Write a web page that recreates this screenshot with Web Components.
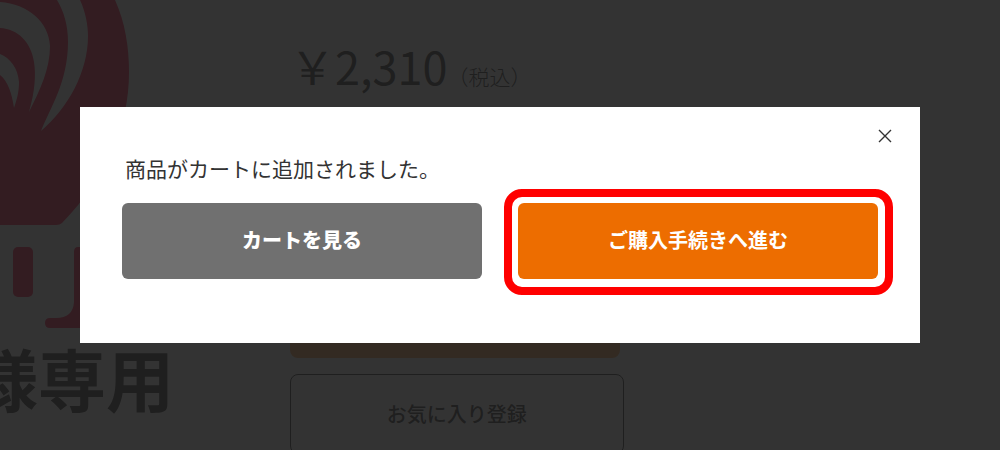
<!DOCTYPE html>
<html lang="ja">
<head>
<meta charset="utf-8">
<meta name="viewport" content="width=device-width, initial-scale=1">
<title>カート</title>
<style>
  html {
    height: 100%;
  }
  body {
    margin: 0;
    height: 100%;
    overflow: hidden;
    background: #fff;
    color: #333;
    font-family: "Noto Sans CJK JP", "Liberation Sans", sans-serif;
    --accent: #ed6d00;
    --gray: #707070;
    --brand: #ff1446;
  }
</style>
</head>
<body>
  <shop-product heading="様専用" price="￥2,310" tax="（税込）">
    <brand-mark slot="image"></brand-mark>
    <button slot="cart" type="button" aria-label="カートに入れる"></button>
    <button slot="favorite" type="button">お気に入り登録</button>
  </shop-product>

  <cart-modal>
    <span slot="message">商品がカートに追加されました。</span>
    <shop-button slot="actions">カートを見る</shop-button>
    <shop-button slot="actions" primary marked>ご購入手続きへ進む</shop-button>
  </cart-modal>

<script>
(function() {
  function createTemplate(html) {
    const template = document.createElement('template');
    template.innerHTML = html;
    return template;
  }

  const markTemplate = createTemplate(`
    <style>
      :host {
        display: block;
      }
      svg {
        display: block;
        fill: var(--brand);
      }
      .cut {
        fill: #fff;
      }
    </style>
    <svg width="174" height="338" viewBox="0 0 174 338" aria-hidden="true">
      <path d="M0 0H115C125 22 129 47 129 72C129 125 108 175 62 223Q60 225 56 225H0Z"/>
      <path class="cut" d="M80 0C86 13 88 26 88 36C88 72 68 108 41 131C50 108 68 82 68 42C68 25 64 12 57 0Z"/>
      <path class="cut" d="M0 2C28 4 49 22 50 46C50 69 40 90 29 112C35 91 36 75 34 62C31 42 18 29 0 28Z"/>
      <path class="cut" d="M0 54C10 58 18 68 19 82C19 92 17 99 14 108C12 94 8 81 0 75Z"/>
      <rect x="13" y="247" width="20" height="50" rx="5"/>
      <path d="M80 247H78Q74 247 74 252V302Q73 318 56 318H50Q45 318 45 323Q45 328 50 328H90V247Z"/>
    </svg>
  `);

  class BrandMarkElement extends HTMLElement {
    constructor() {
      super();
      this.attachShadow({ mode: 'open' }).appendChild(markTemplate.content.cloneNode(true));
    }
  }

  const productTemplate = createTemplate(`
    <style>
      :host {
        display: grid;
        grid-template-columns: 29% minmax(0, 1fr);
      }
      .media {
        display: flex;
        flex-direction: column;
        align-items: flex-end;
        padding-right: 40%;
      }
      h1 {
        margin: 0;
        font-size: 68px;
        font-weight: 700;
        line-height: 80px;
        white-space: nowrap;
      }
      .info {
        display: flex;
        flex-direction: column;
        align-items: flex-start;
        padding-top: 34px;
      }
      .price {
        margin: 0 0 170px;
        font-size: 45px;
        font-weight: 400;
        line-height: 64px;
        white-space: nowrap;
      }
      .price small {
        font-size: 21px;
        font-weight: 300;
      }
      ::slotted(button) {
        box-sizing: border-box;
        width: 47%;
        height: 80px;
        margin: 0;
        border: 1px solid #333;
        border-radius: 8px;
        background: #fff;
        color: inherit;
        font: 500 20px/30px "Noto Sans CJK JP", sans-serif;
      }
      ::slotted([slot="cart"]) {
        width: 330px;
        margin-bottom: 16px;
        border: 0;
        background: #ffa050;
      }
    </style>
    <div class="media">
      <slot name="image"></slot>
      <h1></h1>
    </div>
    <div class="info">
      <p class="price"><span id="price"></span><small id="tax"></small></p>
      <slot name="cart"></slot>
      <slot name="favorite"></slot>
    </div>
  `);

  class ShopProductElement extends HTMLElement {
    constructor() {
      super();
      this.attachShadow({ mode: 'open' }).appendChild(productTemplate.content.cloneNode(true));
    }

    static get observedAttributes() {
      return ['heading', 'price', 'tax'];
    }

    attributeChangedCallback(name, oldValue, newValue) {
      switch (name) {
        case 'heading':
          this.shadowRoot.querySelector('h1').textContent = newValue;
          break;
        case 'price':
        case 'tax':
          this.shadowRoot.getElementById(name).textContent = newValue;
          break;
      }
    }
  }

  const buttonTemplate = createTemplate(`
    <style>
      :host {
        display: block;
        position: relative;
        flex: 1;
      }
      button {
        display: block;
        width: 100%;
        margin: 0;
        padding: 22px 16px 24px;
        border: 0;
        border-radius: 6px;
        background: var(--gray);
        color: #fff;
        font: inherit;
        font-size: 20px;
        font-weight: 900;
        line-height: 30px;
        cursor: pointer;
      }
      :host([primary]) button {
        background: var(--accent);
        font-weight: 700;
      }
      /* red frame round the next step */
      :host([marked])::after {
        content: '';
        position: absolute;
        inset: -14px -15px -16px -14px;
        border: 8px solid #f00;
        border-radius: 18px;
        pointer-events: none;
      }
    </style>
    <button type="button"><slot></slot></button>
  `);

  class ShopButtonElement extends HTMLElement {
    constructor() {
      super();
      this.attachShadow({ mode: 'open' }).appendChild(buttonTemplate.content.cloneNode(true));
    }
  }

  const modalTemplate = createTemplate(`
    <style>
      :host {
        position: fixed;
        inset: 0;
        display: flex;
        align-items: center;
        justify-content: center;
        background: rgba(29, 29, 29, 0.9);
      }
      :host([hidden]) {
        display: none;
      }
      .panel {
        box-sizing: border-box;
        width: 84%;
        padding: 16px 22px 64px 42px;
        background: #fff;
      }
      header {
        display: flex;
        justify-content: flex-end;
      }
      .close {
        display: flex;
        padding: 6px;
        border: 0;
        background: none;
        cursor: pointer;
      }
      .close svg {
        fill: none;
        stroke: #333;
        stroke-width: 1.4;
      }
      p {
        margin: 3px 0 19px 3px;
        font-size: 21px;
        font-weight: 400;
        line-height: 32px;
      }
      .actions {
        display: flex;
        gap: 36px;
        padding-right: 20px;
      }
    </style>
    <div class="panel" role="dialog" aria-modal="true" aria-labelledby="message">
      <header>
        <button class="close" type="button" aria-label="閉じる">
          <svg width="14" height="14" viewBox="0 0 14 14"><path d="M1 1L13 13M13 1L1 13"/></svg>
        </button>
      </header>
      <p id="message"><slot name="message"></slot></p>
      <div class="actions"><slot name="actions"></slot></div>
    </div>
  `);

  class CartModalElement extends HTMLElement {
    constructor() {
      super();
      const shadowRoot = this.attachShadow({ mode: 'open' });
      shadowRoot.appendChild(modalTemplate.content.cloneNode(true));

      shadowRoot.querySelector('.close').addEventListener('click', () => {
        this.hidden = true;
        this.dispatchEvent(new CustomEvent('closed', { bubbles: true }));
      });
    }
  }

  window.customElements.define('brand-mark', BrandMarkElement);
  window.customElements.define('shop-product', ShopProductElement);
  window.customElements.define('shop-button', ShopButtonElement);
  window.customElements.define('cart-modal', CartModalElement);
})();
</script>
</body>
</html>
